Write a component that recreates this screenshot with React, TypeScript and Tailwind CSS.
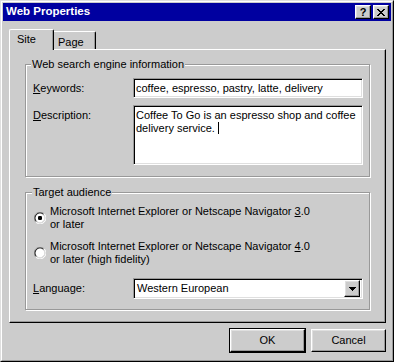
import React from "react";

const raised =
  "border border-t-white border-l-white border-r-black border-b-black shadow-[inset_-1px_-1px_0_#999999,inset_1px_1px_0_#dfdfdf]";
const sunken =
  "border border-t-[#999999] border-l-[#999999] border-r-white border-b-white shadow-[inset_1px_1px_0_#000000,inset_-1px_-1px_0_#dfdfdf]";
const etched =
  "border border-[#999999] shadow-[inset_1px_1px_0_#ffffff,1px_1px_0_#ffffff]";

function CloseGlyph() {
  const rows = [
    "XX....XX",
    ".XX..XX.",
    "..XXXX..",
    "...XX...",
    "..XXXX..",
    ".XX..XX.",
    "XX....XX",
  ];
  return (
    <svg width="8" height="7" viewBox="0 0 8 7" shapeRendering="crispEdges">
      {rows.flatMap((r, y) =>
        r.split("").map((c, x) =>
          c === "X" ? <rect key={`${x}-${y}`} x={x} y={y} width="1" height="1" fill="#000" /> : null
        )
      )}
    </svg>
  );
}

function Radio({ checked }: { checked?: boolean }) {
  return (
    <svg width="12" height="12" viewBox="0 0 12 12" className="shrink-0">
      <path d="M10.2 1.8 A5.9 5.9 0 0 0 1.8 10.2" fill="none" stroke="#999999" strokeWidth="1" />
      <path d="M9.5 2.5 A4.9 4.9 0 0 0 2.5 9.5" fill="none" stroke="#000000" strokeWidth="1" />
      <circle cx="6" cy="6" r="4.4" fill="#ffffff" />
      <path d="M1.8 10.2 A5.9 5.9 0 0 0 10.2 1.8" fill="none" stroke="#ffffff" strokeWidth="1" />
      <path d="M2.5 9.5 A4.9 4.9 0 0 0 9.5 2.5" fill="none" stroke="#dfdfdf" strokeWidth="1" />
      {checked && <rect x="4" y="4" width="4" height="4" rx="1.2" fill="#000" />}
    </svg>
  );
}

export default function App() {
  return (
    <div className="w-[394px] h-[362px] bg-[#cccccc] border border-t-[#dfdfdf] border-l-[#dfdfdf] border-r-black border-b-black font-['Liberation_Sans',Arial,sans-serif] text-[11px] leading-[13px] text-black">
      <div className="h-full border border-t-white border-l-white border-r-[#999999] border-b-[#999999] p-px flex flex-col">
        {/* Title bar */}
        <div className="h-[18px] bg-[#0000a0] flex items-center pl-[3px] pr-[2px] shrink-0">
          <span className="flex-1 text-white font-bold text-[11.5px] leading-none">Web Properties</span>
          <div className="flex gap-[2px]">
            <div className={`w-[16px] h-[14px] ${raised} bg-[#cccccc] flex items-center justify-center font-bold text-[11px] leading-none`}>
              ?
            </div>
            <div className={`w-[16px] h-[14px] ${raised} bg-[#cccccc] flex items-center justify-center`}>
              <CloseGlyph />
            </div>
          </div>
        </div>

        {/* Body */}
        <div className="flex flex-col pl-[6px] pr-[5px]">
          {/* Tabs */}
          <div className="mt-[8px] h-[20px] flex items-end">
            <div className="relative z-10 -mb-px h-[21px] w-[45px] bg-[#cccccc] border-l border-t border-r border-l-white border-t-white border-r-black rounded-t-[2px] shadow-[inset_-1px_0_0_#999999] pl-[7px] pt-[3px]">
              Site
            </div>
            <div className="h-[18px] w-[42px] bg-[#cccccc] border-t border-r border-t-white border-r-black rounded-tr-[2px] shadow-[inset_-1px_0_0_#999999] pl-[4px] pt-[4px]">
              Page
            </div>
          </div>

          {/* Panel */}
          <div className="h-[274px] border border-t-white border-l-white border-r-black border-b-black shadow-[inset_-1px_-1px_0_#999999] pl-[15px] pt-[14px]">
            {/* Group 1 */}
            <div className={`relative w-[345px] h-[113px] ${etched} pl-[7px] pt-[13px]`}>
              <span className="absolute left-[5px] -top-[7px] px-px bg-[#cccccc]">Web search engine information</span>
              <div className="flex items-center h-[20px]">
                <span className="w-[100px]">
                  <u>K</u>eywords:
                </span>
                <div className={`w-[230px] h-[20px] bg-white ${sunken} flex items-center pl-[2px]`}>
                  coffee, espresso, pastry, latte, delivery
                </div>
              </div>
              <div className="flex items-start mt-[7px]">
                <span className="w-[100px] pt-[4px]">
                  <u>D</u>escription:
                </span>
                <div className={`w-[230px] h-[60px] bg-white ${sunken} pl-[2px] pt-[3px]`}>
                  Coffee To Go is an espresso shop and coffee
                  <br />
                  delivery service.{" "}
                  <span className="inline-block w-px h-[12px] bg-black align-[-2px]" />
                </div>
              </div>
            </div>

            {/* Group 2 */}
            <div className={`relative mt-[15px] w-[345px] h-[118px] ${etched} pt-[12px]`}>
              <span className="absolute left-[6px] -top-[7px] px-px bg-[#cccccc]">Target audience</span>
              <div className="flex items-center pl-[8px] gap-[4px]">
                <Radio checked />
                <span>
                  Microsoft Internet Explorer or Netscape Navigator <u>3</u>.0
                  <br />
                  or later
                </span>
              </div>
              <div className="flex items-center pl-[8px] gap-[4px] mt-[9px]">
                <Radio />
                <span>
                  Microsoft Internet Explorer or Netscape Navigator <u>4</u>.0
                  <br />
                  or later (high fidelity)
                </span>
              </div>
              <div className="flex items-center pl-[7px] mt-[12px]">
                <span className="w-[100px]">
                  <u>L</u>anguage:
                </span>
                <div className={`w-[230px] h-[21px] bg-white ${sunken} flex items-center pl-[3px] pr-[2px]`}>
                  <span className="flex-1">Western European</span>
                  <div className={`w-[16px] h-[17px] bg-[#cccccc] ${raised} flex items-center justify-center`}>
                    <svg width="7" height="4" viewBox="0 0 7 4" shapeRendering="crispEdges">
                      <path d="M0 0H7V1H6V2H5V3H4V4H3V3H2V2H1V1H0Z" fill="#000" />
                    </svg>
                  </div>
                </div>
              </div>
            </div>
          </div>

          {/* Buttons */}
          <div className="flex justify-end items-center gap-[5px] pt-[5px]">
            <div className="w-[77px] h-[25px] border border-black">
              <div className={`w-full h-full bg-[#cccccc] ${raised} flex items-center justify-center`}>OK</div>
            </div>
            <div className={`w-[75px] h-[23px] bg-[#cccccc] ${raised} flex items-center justify-center`}>Cancel</div>
          </div>
        </div>
      </div>
    </div>
  );
}
